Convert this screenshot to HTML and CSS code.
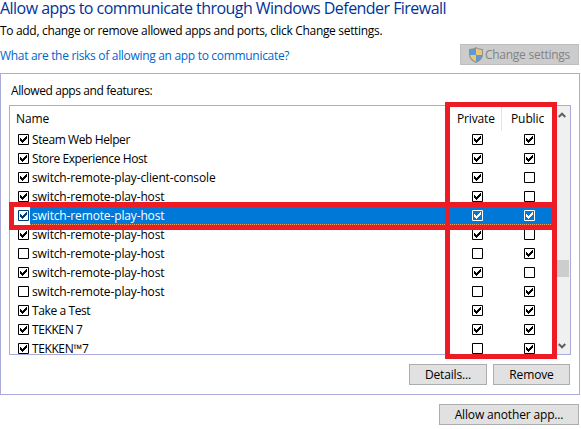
FILE: index.html
```
<!DOCTYPE html>
<html lang="en">
<head>
<meta charset="utf-8">
<title>Allowed apps</title>
<link rel="stylesheet" href="styles.css">
</head>
<body>
<svg class="defs" aria-hidden="true">
  <symbol id="off" viewBox="0 0 11 11"><path class="box" d="M.5.5h10v10H.5z"/></symbol>
  <symbol id="on" viewBox="0 0 11 11"><path class="box" d="M.5.5h10v10H.5z"/><path fill="currentColor" d="M2 4h1v1h1v1h1V5h1V4h1V3h1V2h1v3H8v1H7v1H6v1H5v1H4V8H3V7H2z"/></symbol>
</svg>
<h1>Allow apps to communicate through Windows Defender Firewall</h1>
<p class="hint">To add, change or remove allowed apps and ports, click Change settings.</p>
<div class="bar">
  <a class="link">What are the risks of allowing an app to communicate?</a>
  <button class="btn change" disabled>
    <svg class="shield" viewBox="0 0 14 16"><path fill="#8b9197" d="M7 0 9 1.3 14 2v5.500c0 4-3 6.500-7 8.500-4-2-7-4.500-7-8.500V2l5-.7z"/><path fill="#5d9ad0" d="M7 1.200V8H1V3l4-.7zM7 8h5.900c-.4 3.300-2.900 5.200-5.900 6.800z"/><path fill="#e8c777" d="M7 1.200l2 1.100 4 .7v5H7zM7 8v6.800C4 13.200 1.500 11.300 1.100 8z"/></svg><span>Change settings</span>
  </button>
</div>
<section class="panel">
  <div class="label">Allowed apps and features:</div>
  <div class="list">
    <div class="table">
      <div class="head"><span class="name">Name</span><span class="priv">Private</span><span class="pub">Public</span></div>
      <div id="rows"></div>
    </div>
    <div class="scroll">
      <svg class="arrow" viewBox="0 0 8 6"><path d="M.7 5 4 1.700 7.300 5"/></svg>
      <div class="thumb"></div>
      <svg class="arrow" viewBox="0 0 8 6"><path d="M.7 1 4 4.300 7.300 1"/></svg>
    </div>
  </div>
  <div class="actions"><button class="btn details">Details...</button><button class="btn remove">Remove</button></div>
  <div class="mark mark-row"></div>
  <div class="mark mark-cols"></div>
</section>
<div class="footer"><button class="btn another">Allow another app...</button></div>
<script src="script.js"></script>
</body>
</html>
```
FILE: styles.css
```
* { box-sizing: border-box; }
body { margin: 0; width: 581px; height: 429px; overflow: hidden; background: #fff; color: #000; font: 12px/16px "Open Sans", "Noto Sans", sans-serif; white-space: nowrap; }
.defs { position: absolute; width: 0; height: 0; }
h1 { margin: 0; height: 20px; font-size: 16px; line-height: 17px; font-weight: 400; letter-spacing: -.54px; color: #039; }
.hint { margin: 0; height: 24px; line-height: 22px; letter-spacing: -.32px; }
.bar { display: flex; justify-content: space-between; width: 579px; height: 29px; }
.link { color: #06c; line-height: 24px; letter-spacing: -.31px; }
.btn { display: flex; align-items: center; justify-content: center; height: 21px; margin: 0; padding: 1px 0 0; border: 1px solid #adadad; border-radius: 0; background: #e1e1e1; color: #000; font: inherit; letter-spacing: -.15px; }
.change { width: 119px; gap: 2px; padding: 0; background: #ccc; border-color: #bfbfbf; color: #838383; letter-spacing: -.25px; }
.change span { padding-top: 1px; }
.shield { width: 14px; height: 16px; }
.panel { position: relative; width: 580px; height: 322px; border: 1px solid #acacdc; }
.label { height: 31px; padding-left: 10px; line-height: 33px; letter-spacing: -.4px; }
.list { display: flex; width: 562px; height: 250px; margin-left: 8px; border: 1px solid #acacdc; overflow: hidden; }
.table { width: 543px; }
.head { display: grid; grid-template-columns: 440px 52px 51px; height: 24px; line-height: 25px; }
.name { padding-left: 6px; letter-spacing: -.1px; }
.priv { padding-left: 7px; border-right: 1px solid #e5e5e5; letter-spacing: -.15px; }
.pub { padding-left: 9px; letter-spacing: -.1px; }
.row { display: grid; grid-template-columns: 20px 442px 52px 29px; align-items: center; height: 19px; }
.row svg { display: block; width: 11px; height: 11px; }
.row > svg:first-child { margin-left: 8px; }
.row span { padding-left: 2px; line-height: 19px; letter-spacing: -.4px; }
.row .lower { letter-spacing: -.14px; }
.box { fill: var(--fill, #fff); stroke: currentColor; }
.selected { color: #fff; background: repeating-linear-gradient(90deg, #f0a060 0 1px, #0078d7 1px 2px) 20px 18px / 100% 1px no-repeat, linear-gradient(90deg, #fff 20px, #0078d7 20px); }
.selected > svg:first-child { color: #003c74; }
.selected > svg:not(:first-child) { --fill: #0078d7; }
.scroll { display: grid; grid-template-rows: 154px 17px 77px; width: 17px; background: #f0f0f0; justify-items: center; }
.arrow { width: 8px; height: 6px; margin-top: 6px; }
.arrow:last-child { align-self: end; margin-bottom: 5px; }
.arrow path { fill: none; stroke: #606060; stroke-width: 2; }
.thumb { width: 15px; background: #cdcdcd; }
.actions { display: flex; justify-content: flex-end; gap: 6px; padding: 9px 9px 0 0; }
.details { width: 78px; }
.remove { width: 77px; }
.mark { position: absolute; border: 5px solid #ed1c24; }
.mark-row { left: 8px; top: 128px; width: 548px; height: 28px; }
.mark-cols { left: 444px; top: 28px; width: 112px; height: 257px; }
.footer { display: flex; justify-content: flex-end; width: 579px; padding-top: 9px; }
.another { width: 140px; }
```
FILE: script.js
```
const apps = [
  ["Steam Web Helper", 1, 1, 1],
  ["Store Experience Host", 1, 1, 1],
  ["switch-remote-play-client-console", 1, 1, 0],
  ["switch-remote-play-host", 1, 1, 0],
  ["switch-remote-play-host", 1, 1, 1],
  ["switch-remote-play-host", 1, 1, 0],
  ["switch-remote-play-host", 0, 0, 1],
  ["switch-remote-play-host", 1, 1, 0],
  ["switch-remote-play-host", 0, 0, 1],
  ["Take a Test", 1, 1, 1],
  ["TEKKEN 7", 1, 1, 1],
  ["TEKKEN™7", 1, 0, 1],
];
const check = (on) => `<svg><use href="#${on ? "on" : "off"}"/></svg>`;
document.getElementById("rows").innerHTML = apps.map(([name, enabled, priv, pub], i) =>
  `<div class="row${i === 4 ? " selected" : ""}">${check(enabled)}<span${name.startsWith("switch") ? ' class="lower"' : ""}>${name}</span>${check(priv)}${check(pub)}</div>`
).join("");
```
